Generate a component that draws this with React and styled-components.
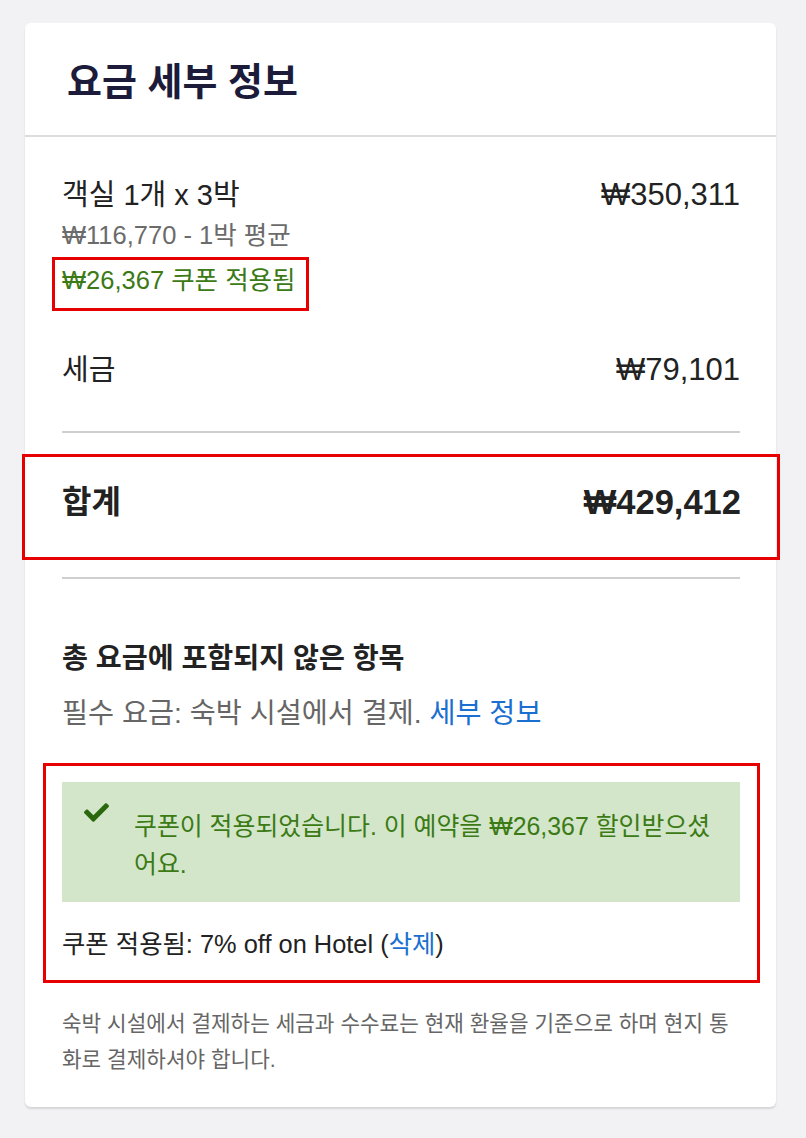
import React from "react";
import styled, { createGlobalStyle } from "styled-components";
import { FaCheck } from "react-icons/fa";

const GlobalStyle = createGlobalStyle`
  body {
    margin: 0;
    background: #f2f2f4;
    font-family: "Liberation Sans", "Noto Sans CJK KR", sans-serif;
    color: #222;
  }
`;

const Page = styled.div`
  padding: 23px 30px 30px 25px;
`;

const Card = styled.div`
  width: 751px;
  background: #fff;
  border-radius: 6px;
  box-shadow: 0 2px 2px rgba(0, 0, 0, 0.12);
  padding-bottom: 29px;
`;

const Header = styled.div`
  height: 112px;
  display: flex;
  align-items: center;
  padding: 0 42px;
  border-bottom: 2px solid #dcdcdc;
`;

const Title = styled.h2`
  margin: 0 0 2px;
  font-size: 38px;
  font-weight: 700;
  color: #1c1c3a;
`;

const Body = styled.div`
  padding: 0 36px 0 37px;
`;

const LineItem = styled.div`
  display: flex;
  justify-content: space-between;
  align-items: flex-start;
  margin-top: ${(p) => p.$top}px;
`;

const ItemMain = styled.div`
  display: flex;
  flex-direction: column;
  align-items: flex-start;
`;

const Label = styled.div`
  font-size: 29px;
  line-height: 36px;
`;

const Amount = styled.div`
  font-size: 31px;
  line-height: 36px;
`;

const Sub = styled.div`
  font-size: 25.5px;
  line-height: 44px;
  color: #6b6b6b;
`;

const Marked = styled.div`
  border: 3px solid #e60000;
  margin-left: -10px;
  padding: 0 10px 8px 7px;
`;

const Discount = styled.div`
  font-size: 25.5px;
  line-height: 40px;
  color: #3b7a14;
`;

const Divider = styled.hr`
  margin: ${(p) => p.$top}px 0 0;
  border: 0;
  height: 2px;
  background: #cfcfcf;
`;

const TotalBox = styled.div`
  margin: 21px -40px 0;
  border: 3px solid #e60000;
  padding: 25px 36px 35px 37px;
  display: flex;
  justify-content: space-between;
  align-items: center;
  line-height: 40px;
  font-weight: 700;
`;

const TotalLabel = styled.div`
  font-size: 32px;
`;

const TotalAmount = styled.div`
  font-size: 34.5px;
`;

const SectionTitle = styled.h3`
  margin: 61px 0 0;
  font-size: 28.2px;
  line-height: 36px;
  font-weight: 700;
  color: #222;
`;

const Note = styled.p`
  margin: 19px 0 0;
  font-size: 28.3px;
  line-height: 36px;
  color: #666;
`;

const Link = styled.a`
  color: #1a6fd0;
  text-decoration: none;
  cursor: pointer;
`;

const CouponBox = styled.div`
  margin: 32px -20px 0 -19px;
  border: 3px solid #e60000;
  padding: 16px 17px 18px 16px;
`;

const Alert = styled.div`
  display: flex;
  align-items: flex-start;
  gap: 25px;
  background: #d3e6ca;
  padding: 25px 24px 19px 22px;
  color: #3b7a14;
  font-size: 24.9px;
  line-height: 38px;
`;

const CheckIcon = styled(FaCheck)`
  flex: none;
  width: 25px;
  height: 25px;
  margin-top: -7px;
  color: #2a680d;
`;

const CouponLine = styled.div`
  margin-top: 24px;
  font-size: 25.4px;
  line-height: 36px;
  color: #222;
`;

const Footnote = styled.p`
  margin: 23px 0 0;
  font-size: 21.3px;
  line-height: 36px;
  color: #666;
`;

export default function App() {
  return (
    <Page>
      <GlobalStyle />
      <Card>
        <Header>
          <Title>요금 세부 정보</Title>
        </Header>
        <Body>
          <LineItem $top={40}>
            <ItemMain>
              <Label>객실 1개 x 3박</Label>
              <Sub>₩116,770 - 1박 평균</Sub>
              <Marked>
                <Discount>₩26,367 쿠폰 적용됨</Discount>
              </Marked>
            </ItemMain>
            <Amount>₩350,311</Amount>
          </LineItem>
          <LineItem $top={41}>
            <Label>세금</Label>
            <Amount>₩79,101</Amount>
          </LineItem>
          <Divider $top={43} />
          <TotalBox>
            <TotalLabel>합계</TotalLabel>
            <TotalAmount>₩429,412</TotalAmount>
          </TotalBox>
          <Divider $top={17} />
          <SectionTitle>총 요금에 포함되지 않은 항목</SectionTitle>
          <Note>
            필수 요금: 숙박 시설에서 결제. <Link>세부 정보</Link>
          </Note>
          <CouponBox>
            <Alert>
              <CheckIcon />
              <span>쿠폰이 적용되었습니다. 이 예약을 ₩26,367 할인받으셨어요.</span>
            </Alert>
            <CouponLine>
              쿠폰 적용됨: 7% off on Hotel (<Link>삭제</Link>)
            </CouponLine>
          </CouponBox>
          <Footnote>
            숙박 시설에서 결제하는 세금과 수수료는 현재 환율을 기준으로 하며 현지 통화로 결제하셔야 합니다.
          </Footnote>
        </Body>
      </Card>
    </Page>
  );
}
